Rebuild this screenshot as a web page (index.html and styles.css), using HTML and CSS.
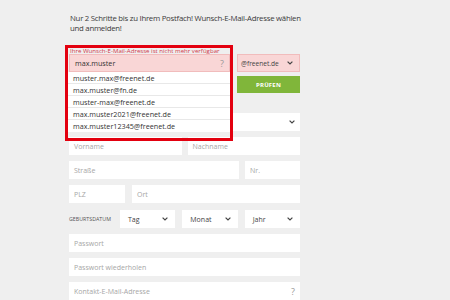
FILE: index.html
```html
<!DOCTYPE html>
<html lang="de">
<head>
<meta charset="utf-8">
<title>freenet Registrierung</title>
<link rel="stylesheet" href="styles.css">
</head>
<body>
<div class="page">
  <p class="intro">Nur 2 Schritte bis zu Ihrem Postfach! Wunsch-E-Mail-Adresse wählen und anmelden!</p>

  <div class="top-row">
    <div class="email-col">
      <div class="hint">Ihre Wunsch-E-Mail-Adresse ist nicht mehr verfügbar</div>
      <div class="field email-input"><span class="value">max.muster</span><span class="help">?</span></div>
      <ul class="suggestions">
        <li>muster.max@freenet.de</li>
        <li>max.muster@fn.de</li>
        <li>muster-max@freenet.de</li>
        <li>max.muster2021@freenet.de</li>
        <li>max.muster12345@freenet.de</li>
      </ul>
    </div>
    <div class="side-col">
      <div class="field select domain"><span class="value">@freenet.de</span><svg class="chev" viewBox="0 0 6 4"><polyline points="0.6,0.6 3,3 5.4,0.6"/></svg></div>
      <button class="check">PRÜFEN</button>
    </div>
  </div>

  <div class="fields">
    <div class="field select"><span class="ph"></span><svg class="chev" viewBox="0 0 6 4"><polyline points="0.6,0.6 3,3 5.4,0.6"/></svg></div>
    <div class="row two">
      <div class="field"><span class="ph">Vorname</span></div>
      <div class="field"><span class="ph">Nachname</span></div>
    </div>
    <div class="row street">
      <div class="field"><span class="ph">Straße</span></div>
      <div class="field"><span class="ph">Nr.</span></div>
    </div>
    <div class="row city">
      <div class="field"><span class="ph">PLZ</span></div>
      <div class="field"><span class="ph">Ort</span></div>
    </div>
    <div class="row birth">
      <span class="label">GEBURTSDATUM</span>
      <div class="field select"><span class="value">Tag</span><svg class="chev" viewBox="0 0 6 4"><polyline points="0.6,0.6 3,3 5.4,0.6"/></svg></div>
      <div class="field select"><span class="value">Monat</span><svg class="chev" viewBox="0 0 6 4"><polyline points="0.6,0.6 3,3 5.4,0.6"/></svg></div>
      <div class="field select"><span class="value">Jahr</span><svg class="chev" viewBox="0 0 6 4"><polyline points="0.6,0.6 3,3 5.4,0.6"/></svg></div>
    </div>
    <div class="field"><span class="ph">Passwort</span></div>
    <div class="field"><span class="ph">Passwort wiederholen</span></div>
    <div class="field"><span class="ph">Kontakt-E-Mail-Adresse</span><span class="help">?</span></div>
  </div>
</div>
</body>
</html>
```

FILE: styles.css
```css
* { box-sizing: border-box; }

html, body {
  margin: 0;
  background: #efefef;
  font-family: "Open Sans", "Noto Sans", sans-serif;
  color: #333;
  height: 300px;
  overflow: hidden;
}

.page {
  width: 330px;
  padding: 12px 0 0 69px;
}

.intro {
  margin: 0 0 16px 1px;
  padding-top: 1px;
  font-size: 7.8px;
  line-height: 10px;
  letter-spacing: -0.26px;
  color: #3a3a3a;
  width: 245px;
}

.top-row {
  display: flex;
  gap: 7px;
  align-items: flex-start;
  margin-top: -1px;
}

.email-col {
  position: relative;
  width: 161px;
  z-index: 3;
}

.email-col::after {
  content: "";
  position: absolute;
  top: -3px;
  left: -4px;
  right: -3px;
  height: 90px;
  border: 3px solid #e3000f;
  pointer-events: none;
}

.hint {
  height: 6px;
  font-size: 6.1px;
  line-height: 5px;
  color: #d0394a;
  padding-left: 1px;
  white-space: nowrap;
}

.field {
  position: relative;
  height: 18px;
  background: #fff;
  display: flex;
  align-items: center;
  padding: 0 5px;
  font-size: 7px;
}

.email-input,
.domain {
  background: #f9d6d6;
  border: 1px solid #f1bcbc;
}

.email-input .value {
  color: #333;
  font-size: 7.2px;
}

.domain .value {
  color: #444;
  font-size: 6.6px;
}

.value { color: #444; }

.ph { color: #a6a6a6; }

.help {
  margin-left: auto;
  color: #999;
  font-size: 9px;
}

.select .chev {
  margin-left: auto;
  width: 6px;
  height: 4px;
  flex: none;
  fill: none;
  stroke: #444;
  stroke-width: 1.2;
}

.suggestions {
  position: absolute;
  top: 100%;
  left: -1px;
  right: 0;
  margin: 0;
  padding: 0;
  list-style: none;
  background: #fff;
}

.suggestions li {
  height: 12px;
  line-height: 12px;
  font-size: 7.2px;
  padding-left: 5px;
  color: #333;
  border-bottom: 1px solid #e8e8e8;
}

.suggestions li:last-child { border-bottom: 0; }

.side-col {
  width: 63px;
  padding-top: 6px;
  display: flex;
  flex-direction: column;
  gap: 4px;
}

.domain { padding: 0 6px 0 3px; }

.check {
  height: 17px;
  border: 0;
  background: #80b63a;
  color: #fff;
  font-family: inherit;
  font-size: 6px;
  font-weight: 700;
  letter-spacing: 0.2px;
  padding: 0;
}

.fields {
  margin-top: 20px;
  width: 231px;
  display: flex;
  flex-direction: column;
  gap: 6px;
}

.row { display: grid; }
.row.two { grid-template-columns: 1fr 1fr; gap: 6px; }
.row.street { grid-template-columns: 1fr 55px; gap: 6px; }
.row.city { grid-template-columns: 56px 1fr; gap: 7px; }
.row.birth {
  grid-template-columns: 44px 1fr 1fr 1fr;
  gap: 7px;
  align-items: center;
  margin-top: 1px;
}

.label {
  font-size: 5.3px;
  color: #555;
  white-space: nowrap;
}

.birth .select { padding: 0 7px 0 8px; }
.birth .value { font-size: 7px; }
```
